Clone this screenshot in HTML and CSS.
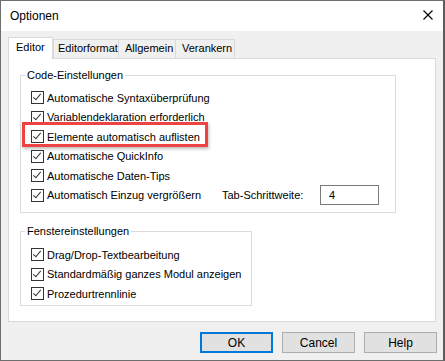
FILE: index.html
```html
<!DOCTYPE html>
<html lang="de">
<head>
    <meta charset="UTF-8">
    <title>Optionen</title>
    <link rel="stylesheet" href="styles.css">
</head>
<body>
    <div class="window">
        <div class="titlebar">
            <span class="title">Optionen</span>
            <svg class="close" width="10" height="10" viewBox="0 0 10 10">
                <path d="M0.5 0.5 L9.5 9.5 M9.5 0.5 L0.5 9.5" stroke="#000" stroke-width="1.1" fill="none"/>
            </svg>
        </div>
        <div class="client">
            <div class="tabs">
                <div class="tab active">Editor</div>
                <div class="tab">Editorformat</div>
                <div class="tab">Allgemein</div>
                <div class="tab">Verankern</div>
            </div>
            <div class="panel">
                <fieldset class="group group-code">
                    <legend>Code-Einstellungen</legend>
                    <div class="row"><i class="cb"></i>Automatische Syntaxüberprüfung</div>
                    <div class="row"><i class="cb"></i>Variablendeklaration erforderlich</div>
                    <div class="row"><i class="cb"></i>Elemente automatisch auflisten<span class="highlight"></span></div>
                    <div class="row"><i class="cb"></i>Automatische QuickInfo</div>
                    <div class="row"><i class="cb"></i>Automatische Daten-Tips</div>
                    <div class="row">
                        <span class="row-main"><i class="cb"></i>Automatisch Einzug vergrößern</span>
                        <span class="tab-label">Tab-Schrittweite:</span>
                        <span class="input">4</span>
                    </div>
                </fieldset>
                <fieldset class="group group-window">
                    <legend>Fenstereinstellungen</legend>
                    <div class="row"><i class="cb"></i>Drag/Drop-Textbearbeitung</div>
                    <div class="row"><i class="cb"></i>Standardmäßig ganzes Modul anzeigen</div>
                    <div class="row"><i class="cb"></i>Prozedurtrennlinie</div>
                </fieldset>
            </div>
            <div class="buttons">
                <button class="btn default">OK</button>
                <button class="btn">Cancel</button>
                <button class="btn">Help</button>
            </div>
        </div>
    </div>
</body>
</html>
```

FILE: styles.css
```css
html, body {
    margin: 0;
    padding: 0;
}
body {
    width: 445px;
    height: 361px;
    font-family: "Liberation Sans", Arial, sans-serif;
    font-size: 11px;
    color: #000;
}
.window {
    box-sizing: border-box;
    width: 445px;
    height: 361px;
    border: 1px solid #6e6e6e;
    border-right: 2px solid #5c5c5c;
    background: #f0f0f0;
    display: flex;
    flex-direction: column;
}
.titlebar {
    height: 30px;
    background: #fff;
    display: flex;
    align-items: center;
    justify-content: space-between;
    padding: 0 10px 0 9px;
}
.title {
    font-size: 12px;
}
.close {
    display: block;
    margin-top: -2px;
}
.client {
    flex: 1;
    padding: 6px 6px 0 7px;
}
.tabs {
    display: flex;
    align-items: flex-end;
    height: 21px;
    position: relative;
    z-index: 1;
}
.tab {
    box-sizing: border-box;
    height: 19px;
    line-height: 17px;
    padding: 0 0 0 6px;
    border: 1px solid #d9d9d9;
    border-bottom: none;
    border-left: none;
    background: #f0f0f0;
    white-space: nowrap;
    overflow: hidden;
}
.tab:nth-child(2) {
    border-left: 1px solid #d9d9d9;
    width: 66px;
    padding-left: 4px;
}
.tab:nth-child(3) {
    width: 57px;
}
.tab:nth-child(4) {
    width: 59px;
}
.tab.active {
    height: 22px;
    width: 45px;
    line-height: 19px;
    padding: 0 0 0 7px;
    background: #fff;
    border: 1px solid #d9d9d9;
    border-bottom: none;
    margin-bottom: -1px;
}
.panel {
    box-sizing: border-box;
    width: 428px;
    height: 264px;
    background: #fff;
    border: 1px solid #d9d9d9;
    padding: 0 0 0 11px;
}
.group {
    box-sizing: border-box;
    min-width: 0;
    margin: 0;
    border: 1px solid #dcdcdc;
    padding: 0 0 0 10px;
}
.group legend {
    line-height: 16px;
    padding: 0 2px;
    margin-left: -6px;
}
.group-code {
    width: 376px;
    height: 146px;
    margin-top: 8px;
    padding-top: 5px;
}
.group-window {
    width: 232px;
    height: 83px;
    margin-top: 10px;
    padding-top: 6px;
}
.row {
    position: relative;
    display: flex;
    align-items: center;
    height: 19.5px;
    white-space: nowrap;
}
.row-main {
    display: flex;
    align-items: center;
    width: 191px;
}
.cb {
    box-sizing: border-box;
    width: 13px;
    height: 13px;
    border: 1px solid #333;
    background: #fff;
    margin-right: 3px;
    position: relative;
    flex: none;
}
.cb::after {
    content: "";
    position: absolute;
    left: 3px;
    top: 0px;
    width: 3px;
    height: 7px;
    border: solid #333;
    border-width: 0 1.3px 1.3px 0;
    transform: rotate(40deg);
}
.highlight {
    position: absolute;
    left: -9px;
    top: -5px;
    width: 186px;
    height: 25px;
    box-sizing: border-box;
    border: 3px solid #ee4343;
    box-shadow: 1px 2px 3px rgba(0, 0, 0, 0.25);
}
.tab-label {
    width: 98px;
}
.input {
    box-sizing: border-box;
    width: 59px;
    height: 20px;
    border: 1px solid #7a7a7a;
    padding-left: 8px;
    line-height: 18px;
}
.buttons {
    display: flex;
    justify-content: flex-end;
    gap: 9px;
    margin-top: 10px;
}
.btn {
    box-sizing: border-box;
    width: 73px;
    height: 21px;
    font-family: inherit;
    font-size: 12px;
    background: #e1e1e1;
    border: 1px solid #adadad;
    padding: 0;
    color: #000;
}
.btn.default {
    border: 2px solid #0078d7;
}
```
